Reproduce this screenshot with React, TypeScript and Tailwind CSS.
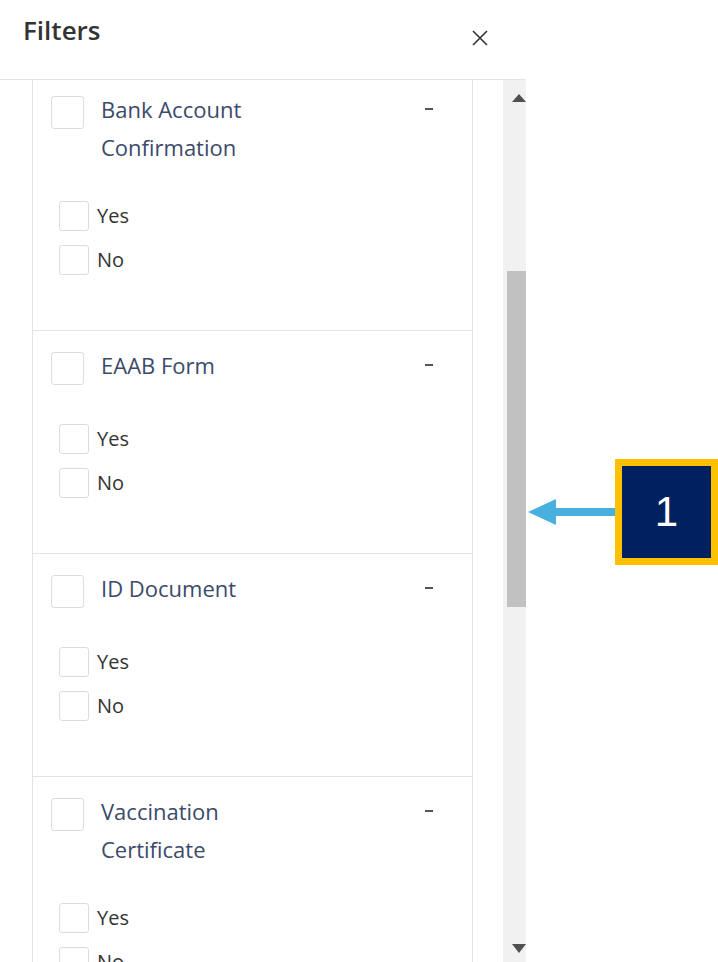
import React from 'react';

type Section = { title: string[] };

const sections: Section[] = [
  { title: ['Bank Account', 'Confirmation'] },
  { title: ['EAAB Form'] },
  { title: ['ID Document'] },
  { title: ['Vaccination', 'Certificate'] },
];

function FilterSection({ section }: { section: Section }) {
  return (
    <div className="border-x border-b border-[#e3e3e3] pt-[15px] pb-[55px] pl-[18px] pr-[38px]">
      {/* Group header */}
      <div className="flex min-h-[43px] items-start">
        <div className="mt-[6px] h-[33px] w-[33px] shrink-0 rounded-[3px] border border-[#dcdcdc] bg-white" />
        <div className="ml-[17px] flex-1 text-[22px] leading-[38px] text-[#3b4a6b]">
          {section.title.map(line => (
            <div key={line}>{line}</div>
          ))}
        </div>
        <div className="mt-[18px] mr-[1px] h-[2px] w-[8px] bg-[#555]" />
      </div>

      {/* Options */}
      <div className="mt-[35px] ml-[8px] flex flex-col gap-[14px]">
        {['Yes', 'No'].map(opt => (
          <div key={opt} className="flex items-center">
            <div className="h-[30px] w-[30px] shrink-0 rounded-[3px] border border-[#dcdcdc] bg-white" />
            <span className="ml-[8px] text-[20px] leading-[30px] text-[#333]">{opt}</span>
          </div>
        ))}
      </div>
    </div>
  );
}

export default function App() {
  return (
    <div
      className="relative h-[962px] w-[718px] overflow-hidden bg-white"
      style={{ fontFamily: '"Open Sans", "Noto Sans", sans-serif' }}
    >
      <div className="flex h-full w-[526px] flex-col">
        {/* Header */}
        <div className="flex h-[80px] shrink-0 items-start justify-between border-b border-[#e3e3e3] pl-[23px] pr-[38px]">
          <h1 className="mt-[11px] text-[26px] font-semibold leading-[38px] text-[#333]">Filters</h1>
          <svg className="mt-[30px]" width="16" height="16" viewBox="0 0 16 16">
            <path d="M1 1L15 15M15 1L1 15" stroke="#333" strokeWidth="1.6" />
          </svg>
        </div>

        {/* Body */}
        <div className="flex min-h-0 flex-1">
          <div className="min-w-0 flex-1 overflow-hidden pl-[32px] pr-[30px]">
            <div className="-mt-[5px]">
              {sections.map((s, i) => (
                <FilterSection key={i} section={s} />
              ))}
            </div>
          </div>

          {/* Scrollbar */}
          <div className="flex w-[23px] shrink-0 flex-col bg-[#f1f1f1]">
            <div className="flex h-[26px] items-end justify-center pl-[9px]">
              <svg width="14" height="8" viewBox="0 0 14 8" className="mb-[4px]">
                <path d="M7 0L14 8H0Z" fill="#505050" />
              </svg>
            </div>
            <div className="mt-[165px] ml-[4px] h-[336px] bg-[#c1c1c1]" />
            <div className="flex-1" />
            <div className="flex h-[20px] items-start justify-center pl-[9px]">
              <svg width="14" height="9" viewBox="0 0 14 9" className="mt-[2px]">
                <path d="M0 0H14L7 9Z" fill="#505050" />
              </svg>
            </div>
          </div>
        </div>
      </div>

      {/* Callout annotation */}
      <svg className="absolute left-[526px] top-[496px]" width="94" height="32" viewBox="0 0 94 32">
        <path d="M2 16L30 3V12H94V20H30V29Z" fill="#47b0df" />
      </svg>
      <div className="absolute left-[615px] top-[459px] flex h-[106px] w-[103px] items-center justify-center border-[7px] border-[#ffc000] bg-[#002060]">
        <span className="text-[42px] leading-none text-white" style={{ fontFamily: '"Liberation Sans", Arial, sans-serif' }}>
          1
        </span>
      </div>
    </div>
  );
}
